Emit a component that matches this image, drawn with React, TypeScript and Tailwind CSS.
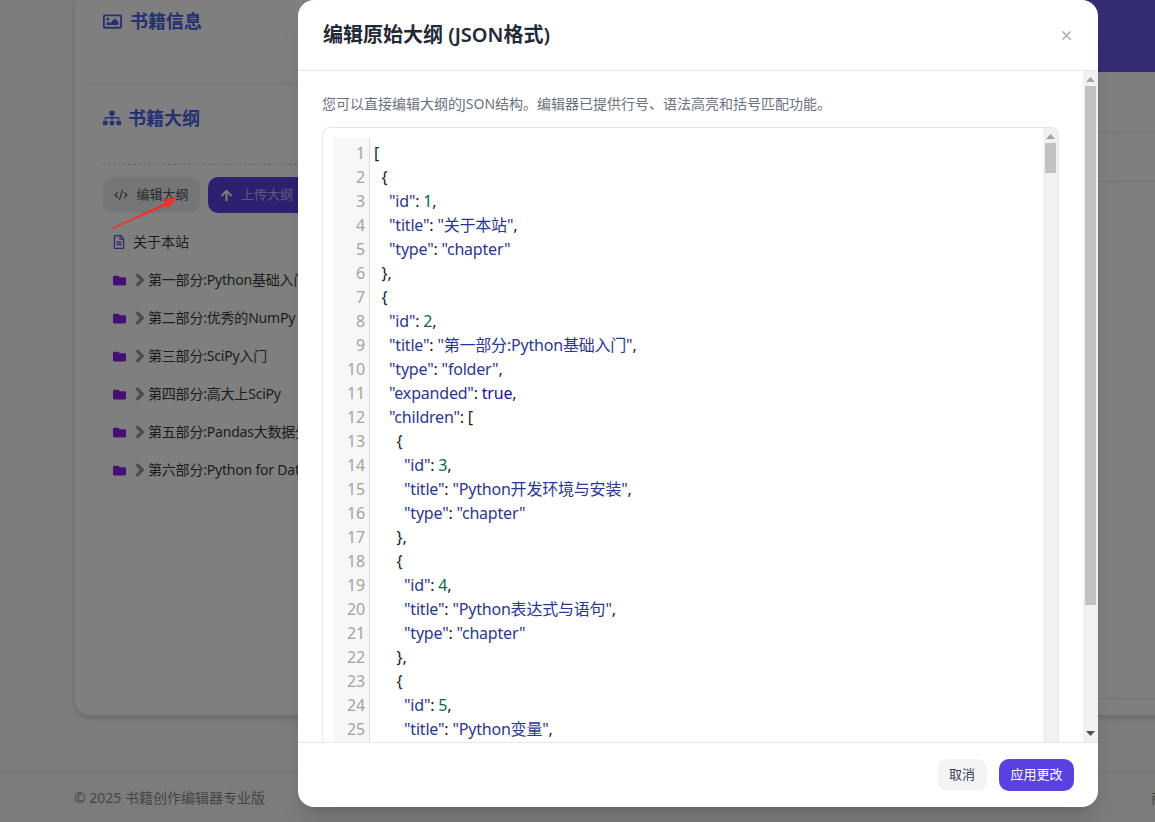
import React from 'react';
import { X, CodeXml } from 'lucide-react';
import { FaRegImage, FaSitemap, FaArrowUp, FaRegFileAlt, FaFolder, FaChevronRight } from 'react-icons/fa';

const folders = [
  '第一部分:Python基础入门',
  '第二部分:优秀的NumPy',
  '第三部分:SciPy入门',
  '第四部分:高大上SciPy',
  '第五部分:Pandas大数据分析',
  '第六部分:Python for Data',
];

const codeLines = [
  '[',
  ' {',
  '  "id": 1,',
  '  "title": "关于本站",',
  '  "type": "chapter"',
  ' },',
  ' {',
  '  "id": 2,',
  '  "title": "第一部分:Python基础入门",',
  '  "type": "folder",',
  '  "expanded": true,',
  '  "children": [',
  '   {',
  '    "id": 3,',
  '    "title": "Python开发环境与安装",',
  '    "type": "chapter"',
  '   },',
  '   {',
  '    "id": 4,',
  '    "title": "Python表达式与语句",',
  '    "type": "chapter"',
  '   },',
  '   {',
  '    "id": 5,',
  '    "title": "Python变量",',
];

const indentClass = ['pl-0', 'pl-[7.5px]', 'pl-[15px]', 'pl-[22.5px]', 'pl-[30px]'];

const tokenClass = (tok: string) => {
  if (tok.startsWith('"')) return 'text-[#2a3795]';
  if (/^\d+$/.test(tok)) return 'text-[#116644]';
  if (tok === 'true') return 'text-[#221199]';
  return 'text-[#222222]';
};

const CodeLine = ({ text }: { text: string }) => {
  const trimmed = text.trimStart();
  const level = text.length - trimmed.length;
  const tokens = trimmed.split(/("[^"]*"|\d+|true)/).filter(Boolean);
  return (
    <div className={`h-6 whitespace-pre ${indentClass[level]}`}>
      {tokens.map((t, i) => (
        <span key={i} className={tokenClass(t)}>{t}</span>
      ))}
    </div>
  );
};

const ArrowUp = () => (
  <svg width="9" height="5" viewBox="0 0 9 5" className="fill-[#a3a3a3]"><path d="M4.5 0L9 5H0z" /></svg>
);

const ArrowDown = () => (
  <svg width="9" height="5" viewBox="0 0 9 5" className="fill-[#505050]"><path d="M4.5 5L9 0H0z" /></svg>
);

const App: React.FC = () => {
  return (
    <div className="relative h-[822px] w-full overflow-hidden bg-[#f8f9fa] font-['Noto_Sans','Noto_Sans_CJK_SC',sans-serif]">
      {/* Page behind the dialog */}
      <div className="h-[772px] pl-[74px]">
        <div className="flex h-[716px] w-[1200px] rounded-b-2xl border border-t-0 border-[#e5e7eb] bg-white shadow-md">
          <div className="w-[400px] shrink-0 px-2">
            <div className="h-[84px] border-b border-[#dee2e6] pl-5 pt-[7px]">
              <h3 className="flex items-center gap-2 text-lg font-semibold text-[#4a60e4]">
                <FaRegImage className="h-[19px] w-[19px]" />
                书籍信息
              </h3>
            </div>
            <div className="pl-5 pt-5">
              <h3 className="flex h-7 items-center gap-[7px] text-lg font-semibold text-[#4a60e4]">
                <FaSitemap className="h-[18px] w-[18px]" />
                书籍大纲
              </h3>
              <div className="mt-[32px] border-t border-dashed border-[#ccd0d5]" />
              <div className="mt-3 flex gap-2">
                <button className="flex h-9 w-[97px] items-center justify-center gap-2 rounded-[10px] bg-[#ebecee] text-[13px] text-[#555555]">
                  <CodeXml className="h-[14px] w-[14px]" strokeWidth={2} />
                  编辑大纲
                </button>
                <button className="flex h-9 w-[120px] items-center gap-2 rounded-[10px] bg-[#5a41e2] pl-3 text-[13px] text-[#ffffff]/60">
                  <FaArrowUp className="h-[13px] w-[13px] text-white" />
                  上传大纲
                </button>
              </div>
              <div className="mt-[18px] flex h-[22px] items-center pl-2.5 text-sm text-[#3a3a3a]">
                <FaRegFileAlt className="h-[14px] w-[12px] text-[#6a50e0]" />
                <span className="ml-2">关于本站</span>
              </div>
              <div className="mt-4 flex flex-col gap-4">
                {folders.map((name) => (
                  <div key={name} className="flex h-[22px] items-center whitespace-nowrap pl-2.5 text-sm tracking-[-0.2px] text-[#3a3a3a]">
                    <FaFolder className="h-[13px] w-[13px] text-[#8a20e8]" />
                    <FaChevronRight className="ml-[9px] h-[14px] w-[10px] stroke-current stroke-[40] text-[#999999]" />
                    <span className="ml-[3px]">{name}</span>
                  </div>
                ))}
              </div>
            </div>
          </div>
          <div className="flex flex-1 flex-col">
            <div className="h-[72px] bg-[#6a5ae6]" />
            <div className="h-[61px] border-b border-[#dee2e6]" />
            <div className="h-[49px] border-b border-[#dee2e6]" />
            <div className="h-[517px] border-b border-[#dee2e6]" />
          </div>
        </div>
      </div>
      <footer className="flex h-[50px] w-[1300px] items-center border-t border-[#dee2e6] pl-[74px] text-sm text-[#8a8a8a]">
        <span>© 2025 书籍创作编辑器专业版</span>
        <span className="ml-[886px]">商务合作</span>
      </footer>

      {/* Dialog */}
      <div className="absolute inset-0 bg-black/50 pl-[298px]">
        <div className="flex h-[807px] w-[800px] flex-col overflow-hidden rounded-2xl bg-white shadow-xl">
          <div className="flex h-[71px] shrink-0 items-center justify-between border-b border-[#e5e7eb] pl-[25px] pr-6">
            <h2 className="text-xl font-semibold text-[#1f2937]">编辑原始大纲 (JSON格式)</h2>
            <X className="h-[15px] w-[15px] text-[#9ca3af]" strokeWidth={2} />
          </div>

          <div className="flex min-h-0 flex-1">
            <div className="flex w-[785px] flex-col px-6 pt-[23px]">
              <p className="text-sm leading-5 text-[#6b7280]">您可以直接编辑大纲的JSON结构。编辑器已提供行号、语法高亮和括号匹配功能。</p>
              <div className="mt-[13px] flex min-h-0 flex-1 overflow-hidden rounded-t-lg border border-b-0 border-[#e5e7eb]">
                <div className="flex min-w-0 flex-1 overflow-hidden pl-2.5 pt-2.5 text-base leading-6 tracking-[-0.2px]">
                  <div className="flex w-[37px] shrink-0 flex-col items-end border-r border-[#dddddd] bg-[#f7f7f7] pr-1 pt-[3px] text-[#a8a29a]">
                    {codeLines.map((_, i) => (
                      <div key={i} className="h-6">{i + 1}</div>
                    ))}
                  </div>
                  <div className="pl-1 pt-[3px]">
                    {codeLines.map((line, i) => (
                      <CodeLine key={i} text={line} />
                    ))}
                  </div>
                </div>
                {/* editor scrollbar */}
                <div className="flex w-[15px] shrink-0 flex-col items-center bg-[#f1f1f1] pt-[6px]">
                  <ArrowUp />
                  <div className="mt-[4px] h-[30px] w-[11px] bg-[#c1c1c1]" />
                </div>
              </div>
            </div>
            {/* dialog scrollbar */}
            <div className="flex w-[15px] shrink-0 flex-col items-center bg-[#f1f1f1] pt-[6px]">
              <ArrowUp />
              <div className="mt-[4px] h-[519px] w-[11px] bg-[#c1c1c1]" />
              <div className="mt-auto pb-[6px]">
                <ArrowDown />
              </div>
            </div>
          </div>

          <div className="flex h-[65px] shrink-0 items-start justify-end gap-3 border-t border-[#e5e7eb] pr-6 pt-4">
            <button className="h-8 w-[50px] rounded-[10px] bg-[#f3f4f6] text-[13px] text-[#374151]">取消</button>
            <button className="h-8 w-[75px] rounded-[10px] bg-[#5a41e2] text-[13px] text-white">应用更改</button>
          </div>
        </div>
      </div>

      {/* Red annotation arrow */}
      <svg className="pointer-events-none absolute left-0 top-0" width="1155" height="822">
        <polygon points="111.5,228 112.5,229 166.5,205.5 168,208.5 177.5,197 163,199.5 165,203" fill="#f5302a" />
      </svg>
    </div>
  );
};

export default App;
